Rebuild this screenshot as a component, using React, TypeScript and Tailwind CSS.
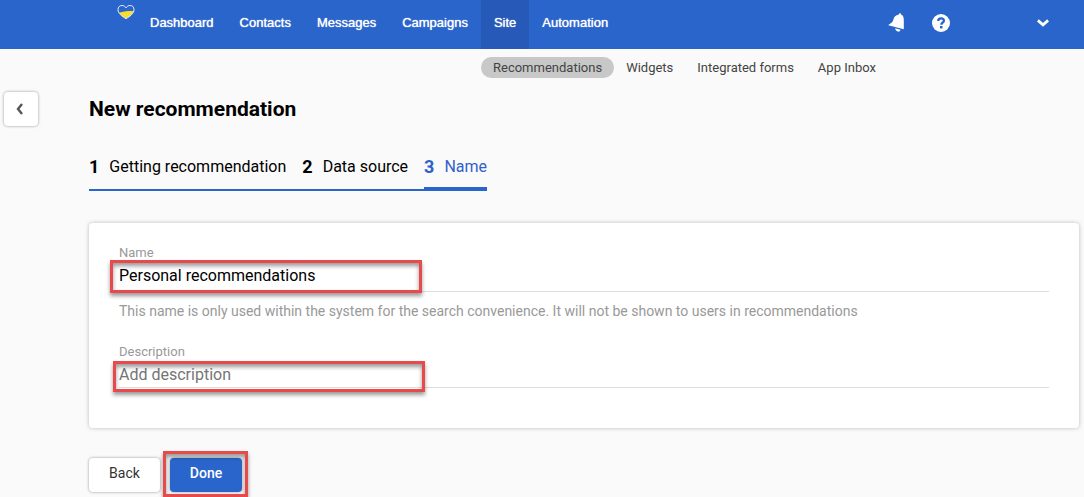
import React from 'react';

const navItems = ['Dashboard', 'Contacts', 'Messages', 'Campaigns', 'Site', 'Automation'];
const subItems = ['Recommendations', 'Widgets', 'Integrated forms', 'App Inbox'];
const steps = ['Getting recommendation', 'Data source', 'Name'];

const HeartLogo = () => <svg className="mt-1 h-4 w-[18px]" viewBox="0 0 18 16">
    <path d="M2 8.6C5 8.6 8 6.4 16.6 7.2C15.6 10.4 12.6 12.6 9 14.6C6 12.8 3.2 11.2 2 8.6Z" fill="#f8dc2e" />
    <path d="M9 14.7C5 12.2 1 9.6 1 5.6C1 3 2.6 1.5 4.9 1.5C6.7 1.5 8.2 2.4 9 3.9C9.8 2.4 11.3 1.5 13.1 1.5C15.4 1.5 17 3 17 5.6C17 9.6 13 12.2 9 14.7Z" fill="none" stroke="#e8eefc" strokeWidth="1" />
  </svg>;

const BellIcon = () => <svg className="h-5 w-5" viewBox="0 0 20 20" fill="#fff">
    <path d="M11.9 1.6C11.7 0 13.9 -0.5 14.1 1.4C16 2.4 16.8 4 16.8 6.8V16.3L1.4 12.3C1.6 10.7 5.2 10.4 6.1 7.4C7 4.2 8.6 2 11.9 1.6Z" />
    <path d="M8.2 15.2L13.6 16.7C13 18.4 11.9 18.9 10.7 18.5C9.4 18.1 8.4 17 8.2 15.2Z" />
  </svg>;

const HelpIcon = () => <svg className="h-5 w-5" viewBox="0 0 20 20">
    <circle cx="10" cy="10" r="9" fill="#fff" />
    <path d="M7.2 8C7.2 6.1 8.4 5.3 10.1 5.3C11.8 5.3 12.9 6.3 12.9 7.7C12.9 9.6 10.3 9.5 10.3 11.8" fill="none" stroke="#2a65cc" strokeWidth="2.3" />
    <rect x="9" y="13" width="2.5" height="2.4" fill="#2a65cc" />
  </svg>;

const ChevronDown = () => <svg className="h-3 w-3" viewBox="0 0 12 12">
    <path d="M0.9 3.4L6 7.8L11.1 3.4" fill="none" stroke="#fff" strokeWidth="2.8" />
  </svg>;

const ChevronLeft = () => <svg className="h-3 w-3" viewBox="0 0 12 12">
    <path d="M8 1L4 6L8 11" fill="none" stroke="#555" strokeWidth="2.4" />
  </svg>;

// Red frame that points the reader to a control
const Highlight = ({ className }: { className: string }) => <span className={`pointer-events-none absolute border-3 border-[#e84a4c] shadow-[0_3px_4px_rgba(0,0,0,0.4),inset_0_3px_4px_rgba(0,0,0,0.4)] ${className}`} />;

const Header = () => <header className="flex h-[49px] items-start bg-[#2a65cc] pr-[35px] pl-[117px] text-white">
    <HeartLogo />
    <nav className="ml-0.5 flex h-full font-['Liberation_Sans',sans-serif] text-[13px] text-shadow-[0_0_1px_#fff]">
      {navItems.map(item => <a key={item} href="#" className={`flex h-full items-center px-[13px] pb-1 ${item === 'Site' ? 'bg-[#2659b8]' : ''}`}>
          {item}
        </a>)}
    </nav>
    <div className="ml-auto flex h-full items-center pb-1">
      <button type="button" aria-label="Notifications" className="mr-6">
        <BellIcon />
      </button>
      <button type="button" aria-label="Help" className="mr-[86px]">
        <HelpIcon />
      </button>
      <button type="button" aria-label="Account">
        <ChevronDown />
      </button>
    </div>
  </header>;

export default function App() {
  return <div className="min-h-screen bg-[#fafafa] font-['Roboto',sans-serif] text-black">
      <Header />
      <nav className="flex pt-2 pl-[481px] text-[13px] leading-[21px] text-[#444]">
        {subItems.map((item, index) => <a key={item} href="#" className={`rounded-full px-3 whitespace-nowrap ${index === 0 ? 'bg-[#c8c8c8]' : ''}`}>
            {item}
          </a>)}
      </nav>
      <div className="flex items-start pt-3.5 pr-[5px] pl-1">
        <button type="button" aria-label="Collapse" className="mr-[51px] flex h-[34px] w-[34px] shrink-0 items-center rounded-sm bg-white pl-2.5 shadow-[0_0_3px_rgba(0,0,0,0.4)]">
          <ChevronLeft />
        </button>
        <main className="min-w-0 flex-1">
          <h1 className="pt-1 text-[21px] leading-[26px] font-bold">New recommendation</h1>
          <ol className="mt-[26px] flex w-fit">
            {steps.map((step, index) => <li key={step} className={`flex h-[43px] items-start border-b-[#2a65cc] pt-[7px] leading-6 ${index === 2 ? 'border-b-4 text-[#2f62c8]' : 'border-b-2 pr-4'}`}>
                <span className="mr-2.5 text-lg leading-6 font-bold">{index + 1}</span>
                <span>{step}</span>
              </li>)}
          </ol>
          <form>
            <div className="mt-8 rounded-sm bg-white px-[30px] pt-5 pb-10 shadow-[0_0_4px_rgba(0,0,0,0.25)]">
              <div className="relative">
                <label htmlFor="name" className="block text-[13px] leading-5 text-[#999]">Name</label>
                <input id="name" type="text" defaultValue="Personal recommendations" className="block h-[29px] w-full border-b border-[#ddd] pb-1 text-base outline-none" />
                <Highlight className="top-[17px] left-[-9px] h-[33px] w-[312px]" />
              </div>
              <p className="mt-2 text-sm leading-[22px] text-[#999]">
                This name is only used within the system for the search convenience. It will not be shown to users in recommendations
              </p>
              <div className="relative mt-5">
                <label htmlFor="description" className="block text-[13px] leading-5 text-[#999]">Description</label>
                <input id="description" type="text" placeholder="Add description" className="block h-[26px] w-full border-b border-[#ddd] text-base outline-none placeholder:text-[#757575]" />
                <Highlight className="top-[19px] left-[-6px] h-[31px] w-[312px]" />
              </div>
            </div>
            <div className="mt-[30px] flex gap-2.5 text-sm">
              <button type="button" className="h-[34px] w-[71px] rounded-sm bg-white pb-1 text-[#333] shadow-[0_0_3px_rgba(0,0,0,0.4)]">Back</button>
              <div className="relative">
                <button type="button" className="h-[34px] w-[72px] rounded-sm bg-[#2a65cc] pb-1 font-medium text-white shadow-[0_0_3px_rgba(0,0,0,0.4)]">Done</button>
                <Highlight className="top-[-7px] left-[-7px] h-[46px] w-[85px]" />
              </div>
            </div>
          </form>
        </main>
      </div>
    </div>;
}
